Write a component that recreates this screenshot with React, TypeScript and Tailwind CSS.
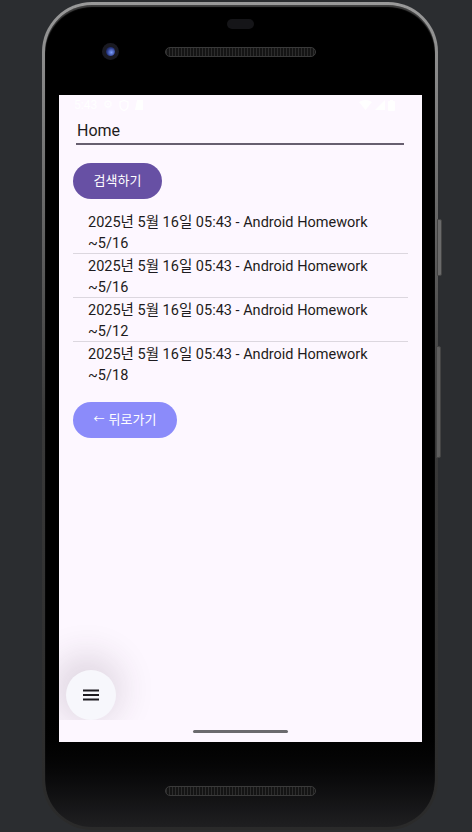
import React from "react";

const items = ["~5/16", "~5/16", "~5/12", "~5/18"];

const speaker =
  "w-[151px] h-[10px] rounded-full border border-[#3a3a3a] bg-[repeating-linear-gradient(90deg,#2c2c2c_0px,#2c2c2c_1px,#141414_1px,#141414_3px)]";

export default function App() {
  return (
    <div
      className="w-[472px] h-[832px] bg-[#2b2d30] overflow-hidden pt-[2px] pl-[42px]"
      style={{ fontFamily: "Roboto, 'Noto Sans CJK KR', sans-serif" }}
    >
      {/* phone body */}
      <div className="relative w-[396px] h-[828px] rounded-[50px] bg-gradient-to-b from-[#9a9a9a] via-[#3a3a3a] to-[#2a2a2a] p-[3px]">
        {/* side buttons */}
        <div className="absolute left-[395px] top-[217px] w-[5px] h-[57px] rounded-r-[2px] bg-[#6a6a6a] border border-[#444]" />
        <div className="absolute left-[394px] top-[344px] w-[5px] h-[112px] rounded-r-[2px] bg-[#5f5f5f] border border-[#444]" />
        <div className="w-full h-full rounded-[47px] bg-gradient-to-b from-black via-black via-85% to-[#1f1f21] flex flex-col shadow-[inset_0_2px_1px_rgba(255,255,255,0.25)]">
          {/* top bezel */}
          <div className="h-[90px] flex flex-col items-center pt-[14px]">
            <div className="w-[27px] h-[10px] rounded-full bg-[#151518]" />
            <div className="w-full mt-[14px] grid grid-cols-[1fr_151px_1fr] items-center">
              <div className="pl-[57px]">
                <div className="w-[17px] h-[17px] rounded-full bg-[#1a1a22] flex items-center justify-center">
                  <div className="w-[9px] h-[9px] rounded-full bg-[radial-gradient(circle_at_60%_60%,#7da0ff,#2a3a8a_55%,#0a0a1a)]" />
                </div>
              </div>
              <div className={speaker} />
              <div />
            </div>
          </div>

          {/* screen */}
          <div className="relative ml-[14px] w-[363px] h-[647px] bg-[#fdf7ff] overflow-hidden flex flex-col">
            {/* status bar */}
            <div className="h-[20px] flex items-center justify-between px-[15px] text-white text-[12px]">
              <div className="flex items-center gap-[6px]">
                <span>5:43</span>
                <span className="text-[11px]">⚙</span>
                <svg width="10" height="11" viewBox="0 0 10 11"><path d="M5 0.5 L9 2 V5.5 C9 8 7 9.8 5 10.5 C3 9.8 1 8 1 5.5 V2 Z" fill="none" stroke="white" strokeWidth="1.3" /></svg>
                <svg width="8" height="10" viewBox="0 0 8 10"><path d="M2 0 H8 V10 H0 Z" fill="white" /></svg>
              </div>
              <div className="flex items-center gap-[3px] pr-[12px]">
                <svg width="13" height="10" viewBox="0 0 13 10"><path d="M0 2 Q6.5 -2 13 2 L6.5 10 Z" fill="white" /></svg>
                <svg width="10" height="10" viewBox="0 0 10 10"><path d="M10 0 V10 H0 Z" fill="white" /></svg>
                <svg width="7" height="11" viewBox="0 0 7 11"><rect x="0" y="1" width="7" height="10" rx="1" fill="white" /><rect x="2" y="0" width="3" height="2" fill="white" /></svg>
              </div>
            </div>

            {/* content */}
            <div className="flex-1 flex flex-col items-start pl-[14px]">
              {/* text field */}
              <div className="ml-[3px] w-[328px] h-[30px] border-b-2 border-[#675f70] flex items-end pb-[2px] pl-[1px]">
                <span className="text-[16px] leading-[20px] text-[#1d1b20]">Home</span>
              </div>

              {/* search button */}
              <button className="mt-[18px] w-[89px] h-[36px] rounded-full bg-[#6750a4] text-white text-[13px] flex items-center justify-center">
                검색하기
              </button>

              {/* list */}
              <div className="mt-[11px] w-[335px] flex flex-col">
                {items.map((d, i) => (
                  <div key={i} className={i > 0 ? "border-t border-[#dcd7df]" : ""}>
                    <div className="h-[43px] pl-[15px] pt-[2px] flex flex-col text-[14.5px] leading-[21px] text-[#1d1b20]">
                      <div>2025년 5월 16일 05:43 - Android Homework</div>
                      <div>{d}</div>
                    </div>
                  </div>
                ))}
              </div>

              {/* back button */}
              <button className="mt-[17px] w-[104px] h-[36px] rounded-full bg-[#8b8bfa] text-white text-[13px] flex items-center justify-center gap-[4px]">
                <span className="text-[11px]">←</span>
                <span>뒤로가기</span>
              </button>
            </div>

            {/* nav bar */}
            <div className="h-[22px] flex items-center justify-center">
              <div className="w-[95px] h-[3px] rounded-full bg-[#6b6a6e]" />
            </div>

            {/* FAB with clipped shadow */}
            <div className="absolute left-0 bottom-[22px] w-[103px] h-[120px] overflow-hidden">
              <div className="absolute left-[7px] top-[70px] w-[50px] h-[50px] rounded-full bg-[#f7f7fc] shadow-[-4px_-6px_34px_10px_rgba(60,40,60,0.15)] flex items-center justify-center">
                <svg width="18" height="14" viewBox="0 0 18 14">
                  <rect x="1" y="1.5" width="16" height="2" fill="#1d1b20" />
                  <rect x="1" y="6" width="16" height="2" fill="#1d1b20" />
                  <rect x="1" y="10.5" width="16" height="2" fill="#1d1b20" />
                </svg>
              </div>
            </div>
          </div>

          <div className="flex-1 flex items-start justify-center pt-[44px]">
            <div className={speaker} />
          </div>
        </div>
      </div>
    </div>
  );
}
